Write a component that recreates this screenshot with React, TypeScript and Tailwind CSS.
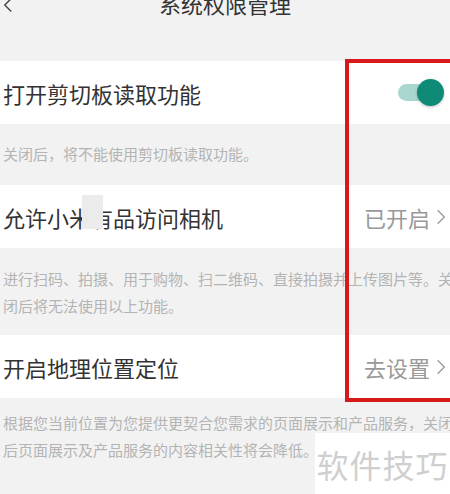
// System permission settings screen (cropped phone screenshot)
const font = { fontFamily: '"Noto Sans CJK SC", "Noto Sans", sans-serif' }

function Chevron({ className }: { className?: string }) {
  return (
    <svg viewBox="0 0 12 20" className={className} fill="none" stroke="currentColor" strokeWidth="1.6">
      <path d="M2 2l8 8-8 8" />
    </svg>
  )
}

function Row({ title, children }: { title: React.ReactNode; children?: React.ReactNode }) {
  return (
    <div className="relative flex h-[63px] items-center justify-between bg-white pl-[3px] pr-[4px]">
      <span className="text-[22px] leading-none text-[#333]">{title}</span>
      {children}
    </div>
  )
}

function Link({ label }: { label: string }) {
  return (
    <div className="flex items-center gap-[6px] text-[#999]">
      <span className="text-[22px] leading-none">{label}</span>
      <Chevron className="h-[18px] w-[10px]" />
    </div>
  )
}

export default function App() {
  return (
    <div className="relative h-[494px] w-[450px] overflow-hidden bg-[#f2f2f2]" style={font}>
      {/* Header */}
      <div className="relative -mt-[14px] flex h-[75px] items-start justify-center pt-[3px]">
        <svg viewBox="0 0 12 20" className="absolute left-[3px] top-[11px] h-[16px] w-[10px] text-[#444]" fill="none" stroke="currentColor" strokeWidth="1.8">
          <path d="M10 2L2 10l8 8" />
        </svg>
        <span className="text-[22px] leading-[28px] text-[#333]">系统权限管理</span>
      </div>

      {/* Clipboard */}
      <Row title="打开剪切板读取功能">
        <div className="relative mr-[2px] h-[27px] w-[46px]">
          <div className="absolute left-0 right-[4px] top-[5px] h-[17px] rounded-full bg-[#a9d6cf]" />
          <div className="absolute right-0 top-0 h-[27px] w-[27px] rounded-full bg-[#0f8a77] shadow-[0_1px_3px_rgba(0,0,0,0.25)]" />
        </div>
      </Row>
      <div className="flex h-[61px] items-center whitespace-nowrap pl-[3px] text-[15px] text-[#b4b4b4]">
        关闭后，将不能使用剪切板读取功能。
      </div>

      {/* Camera */}
      <Row
        title={
          <span className="relative">
            允许小米有品访问相机
            <span className="absolute left-[79px] top-[-6px] h-[34px] w-[21px] bg-[#ebebeb]" />
          </span>
        }
      >
        <Link label="已开启" />
      </Row>
      <div className="flex h-[87px] flex-col justify-center whitespace-nowrap pl-[3px] text-[15px] leading-[27px] text-[#b4b4b4]">
        <span>进行扫码、拍摄、用于购物、扫二维码、直接拍摄并上传图片等。关</span>
        <span>闭后将无法使用以上功能。</span>
      </div>

      {/* Location */}
      <Row title="开启地理位置定位">
        <Link label="去设置" />
      </Row>
      <div className="flex flex-col whitespace-nowrap pl-[3px] pt-[11px] text-[15px] leading-[27px] text-[#b4b4b4]">
        <span>根据您当前位置为您提供更契合您需求的页面展示和产品服务，关闭</span>
        <span>后页面展示及产品服务的内容相关性将会降低。</span>
      </div>

      {/* Red highlight box */}
      <div className="pointer-events-none absolute left-[345px] top-[59px] h-[343px] w-[120px] border-[4px] border-[#d7191c]" />

      {/* Watermark */}
      <div className="absolute left-[315px] top-[433px] flex h-[61px] w-[135px] items-center justify-center bg-white text-[32px] tracking-[1px] text-[#cfcfcf]">
        软件技巧
      </div>
    </div>
  )
}
